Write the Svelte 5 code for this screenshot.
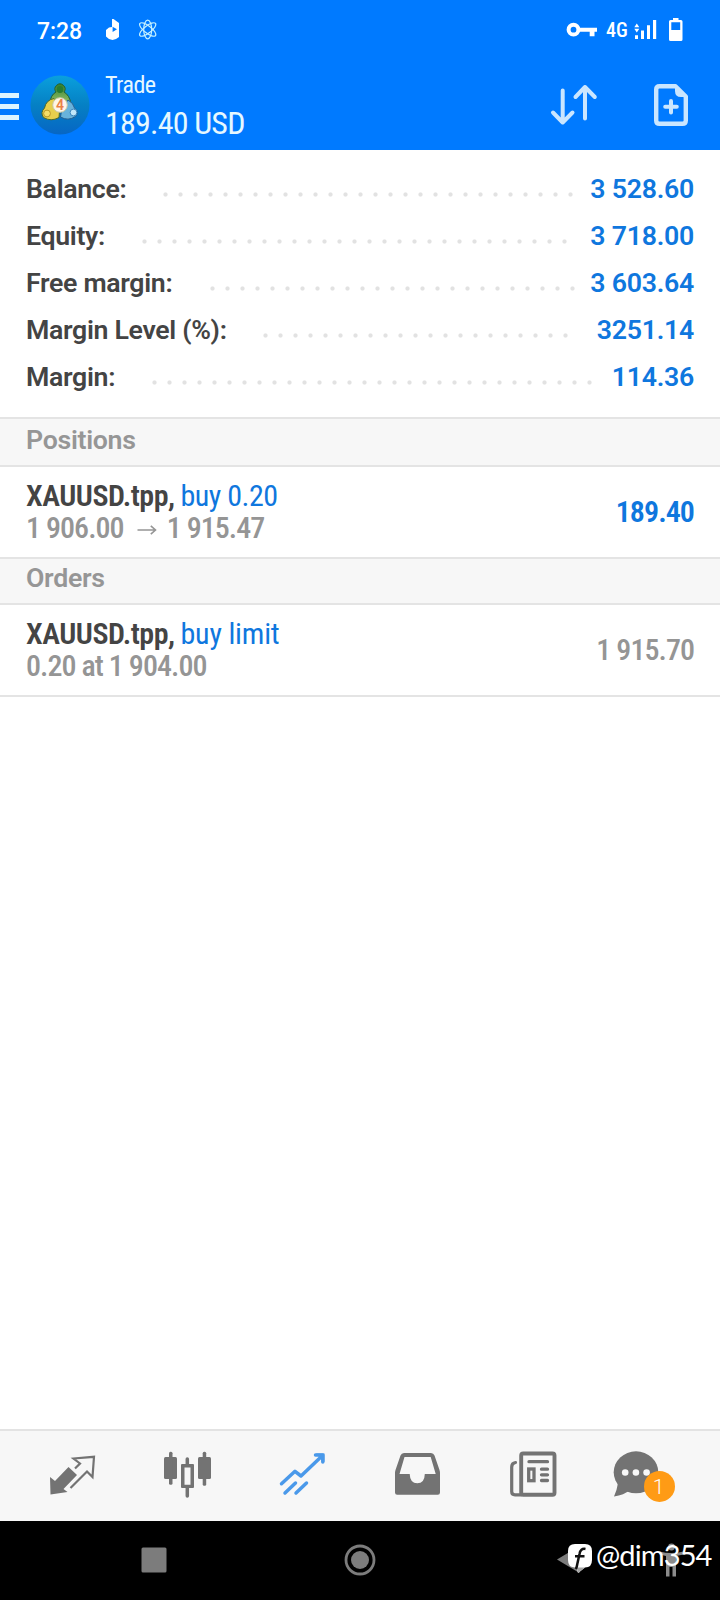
<script>
  const account = [
    { label: 'Balance:', value: '3 528.60', lead: 158, dots: 28 },
    { label: 'Equity:', value: '3 718.00', lead: 137, dots: 29 },
    { label: 'Free margin:', value: '3 603.64', lead: 205, dots: 25 },
    { label: 'Margin Level (%):', value: '3251.14', lead: 258, dots: 21 },
    { label: 'Margin:', value: '114.36', lead: 147, dots: 30 },
  ];
</script>

<div class="screen">
  <header>
    <div class="status">
      <span class="clock">7:28</span>
      <svg class="music" width="16" height="24" viewBox="104 18 16 24">
        <path fill="#fff" fill-rule="evenodd" d="M112 19 H113.500 L119 23 V37 L116 39 L112.500 40 L109 39 L106 36.500 V30 L109 27.500 L112 27 Z M112.600 26.800 V32 L117 29.300 Z" />
      </svg>
      <svg class="atom" width="20" height="22" viewBox="138 19 20 22" fill="none" stroke="#c4f1ff" stroke-width="1.200">
        <ellipse cx="147.700" cy="29.500" rx="4" ry="9.300" />
        <ellipse cx="147.700" cy="29.500" rx="3.600" ry="9.900" transform="rotate(52 147.700 29.500)" />
        <ellipse cx="147.700" cy="29.500" rx="3.600" ry="9.900" transform="rotate(-52 147.700 29.500)" />
      </svg>
      <svg class="key" width="32" height="18" viewBox="566 21 32 18">
        <circle cx="573.500" cy="29.700" r="4.900" fill="none" stroke="#fff" stroke-width="4" />
        <path d="M579 27.700 H597 V31.700 H594.500 V36.300 H589.700 V31.700 H579 Z" fill="#fff" />
      </svg>
      <span class="net">4G</span>
      <svg class="signal" width="24" height="22" viewBox="634 19 24 22" fill="#fff">
        <path d="M634.300 27.200 L636.800 23.500 L639.300 27.200 Z M634.300 28.800 L636.800 32.500 L639.300 28.800 Z M635 35.300 h3 V39 h-3 Z M641 30.500 h3 V39 h-3 Z M647 25.300 h3 V39 h-3 Z M653 20 h3.200 V39 h-3.200 Z" />
      </svg>
      <svg class="battery" width="16" height="24" viewBox="668 18 16 24">
        <path fill="#fff" fill-rule="evenodd" d="M673 18 H678.500 V20 H681 Q682.500 20 682.500 21.500 V39.500 Q682.500 41 681 41 H670.500 Q669 41 669 39.500 V21.500 Q669 20 670.500 20 H673 Z M671.300 22.300 V30 H680.200 V22.300 Z" />
      </svg>
    </div>
    <div class="appbar">
      <div class="burger"><i></i><i></i><i></i></div>
      <svg class="logo" width="62" height="62" viewBox="0 0 62 62">
        <defs>
          <linearGradient id="disc" x1="0" y1="0" x2="0" y2="1">
            <stop offset="0" stop-color="#0aa0dd" />
            <stop offset=".5" stop-color="#0580c4" />
            <stop offset="1" stop-color="#0766c4" />
          </linearGradient>
          <linearGradient id="leaf" x1="0" y1="0" x2="0" y2="1">
            <stop offset="0" stop-color="#36802c" />
            <stop offset="1" stop-color="#a8cf78" />
          </linearGradient>
        </defs>
        <circle cx="31" cy="31" r="29.500" fill="url(#disc)" />
        <path d="M21 29 Q21.500 21 27 18 A5 5 0 1 1 35 18 Q40.500 21 42 30 L31 34 Z" fill="url(#leaf)" stroke="#24602f" stroke-width="1" />
        <circle cx="31" cy="15.500" r="3.400" fill="#287c30" />
        <path d="M25 24.500 Q17 26 15.500 34 Q11 38.500 14.500 43.500 Q22 48 30 43.500 L31 31 Z" fill="#e6cf4c" stroke="#4d6a2b" stroke-width="1" />
        <circle cx="18" cy="39.500" r="3.400" fill="#f5de68" stroke="#bb9827" />
        <path d="M39 26 Q44.500 29 45.500 34 Q50.500 38 46.500 42.500 Q39 47.500 31.500 43 L33 34 Z" fill="#68b3dc" stroke="#265f91" stroke-width="1" />
        <circle cx="44.500" cy="38.500" r="3.400" fill="#c2e8fa" stroke="#3b86bd" />
        <circle cx="31" cy="31" r="7.300" fill="#fff5e8" stroke="#c8c8a3" />
        <text x="31" y="35.800" text-anchor="middle" font-family="Roboto, sans-serif" font-size="14" font-weight="600" fill="#eb8145">4</text>
      </svg>
      <div class="title">
        <div class="name">Trade</div>
        <div class="amount">189.40 USD</div>
      </div>
      <svg class="sort" width="48" height="44" viewBox="550 83 48 44" fill="none" stroke="#cae6ff" stroke-width="4" stroke-linecap="round" stroke-linejoin="round">
        <path d="M562.700 90.500 V122 M553 112.500 L562.700 122.500 L572.500 112.500 M585 118.500 V87 M575.500 97 L585 87 L594.800 97" />
      </svg>
      <svg class="add" width="36" height="44" viewBox="653 83 36 44">
        <path d="M675.500 86.200 H659.500 Q656.200 86.200 656.200 89.500 V120.500 Q656.200 123.800 659.500 123.800 H682.500 Q685.800 123.800 685.800 120.500 V96.500 Z" fill="none" stroke="#cae6ff" stroke-width="4.400" stroke-linejoin="round" />
        <path d="M675 85 V91 Q675 97 681 97 H687 Z" fill="#cae6ff" />
        <path d="M671 101 V112.600 M665.200 106.800 H676.800" stroke="#cae6ff" stroke-width="4" stroke-linecap="round" />
      </svg>
    </div>
  </header>

  <section class="account">
    {#each account as row}
      <div class="line" style="grid-template-columns: {row.lead - 26}px {row.dots * 15}px 1fr">
        <span class="label">{row.label}</span>
        <span class="dots"></span>
        <span class="value">{row.value}</span>
      </div>
    {/each}
  </section>

  <h2 class="first"><span>Positions</span></h2>
  <div class="deal">
    <div>
      <div class="top"><b>XAUUSD.tpp,</b><span class="side">buy 0.20</span></div>
      <div class="sub">
        <span>1 906.00</span>
        <svg width="20" height="12" viewBox="0 0 20 12" fill="none" stroke="#959595" stroke-width="1.600"><path d="M0.500 6 H18 M13.800 1.800 L18.500 6 L13.800 10.200" /></svg>
        <span>1 915.47</span>
      </div>
    </div>
    <div class="result profit">189.40</div>
  </div>
  <h2><span>Orders</span></h2>
  <div class="deal last">
    <div>
      <div class="top"><b>XAUUSD.tpp,</b><span class="side limit">buy limit</span></div>
      <div class="sub"><span>0.20 at 1 904.00</span></div>
    </div>
    <div class="result">1 915.70</div>
  </div>

  <nav class="tabs">
    <svg viewBox="42 1440 60 60">
      <path d="M50 1477 L55 1481 L68.500 1467 L77 1475 L63.500 1489 L67.500 1492 L50.500 1494.500 Z" fill="#737373" />
      <path d="M75 1468.500 L80 1463.500 L73.500 1458.500 L94 1456.800 L92.500 1477 L87 1471.500 L70.500 1488" fill="none" stroke="#737373" stroke-width="2.200" />
    </svg>
    <svg viewBox="157 1440 60 60" fill="#737373">
      <rect x="164" y="1457" width="13" height="22" rx="1.500" />
      <rect x="169" y="1451.700" width="3.500" height="33" rx="1.500" />
      <rect x="198" y="1457" width="13" height="22" rx="1.500" />
      <rect x="202.700" y="1451.700" width="3.500" height="34" rx="1.500" />
      <path d="M187.300 1459 V1465 M187.300 1487 V1496" stroke="#737373" stroke-width="3.500" stroke-linecap="round" />
      <path fill-rule="evenodd" d="M182 1464 H193 Q194 1464 194 1465 V1487 Q194 1488 193 1488 H182 Q181 1488 181 1487 V1465 Q181 1464 182 1464 Z M184.500 1467.500 V1484.700 H190.500 V1467.500 Z" />
    </svg>
    <svg viewBox="272 1440 60 60" fill="none" stroke="#4a99ea" stroke-width="3.500" stroke-linecap="round" stroke-linejoin="round">
      <path d="M281.500 1483.700 L295 1471.300 L301 1476 L322 1456 M315.500 1455 H322.800 V1462" />
      <path d="M316 1453.500 H324.500 V1462 Z" fill="#4a99ea" stroke="none" />
      <path d="M285 1493 L295.500 1483 M296 1493 L306.500 1483" />
    </svg>
    <svg viewBox="387 1440 60 60" fill="#737373">
      <path fill-rule="evenodd" d="M404 1453 H431 Q433.500 1453 434.500 1455.500 L439.500 1470 Q440 1471.500 440 1473 V1492.500 Q440 1494.700 437.800 1494.700 H397.200 Q395 1494.700 395 1492.500 V1473 Q395 1471.500 395.500 1470 L400.500 1455.500 Q401.500 1453 404 1453 Z M404.500 1457 L399.500 1474 H409.700 Q410 1483.300 417.300 1483.300 Q424.600 1483.300 424.800 1474 H435.700 L430.700 1457 Z" />
    </svg>
    <svg viewBox="502 1440 60 60" fill="none" stroke="#737373" stroke-linecap="round">
      <rect x="521.200" y="1453.500" width="33.300" height="41.200" rx="2" stroke-width="3.900" />
      <path d="M515.500 1462.500 Q511.700 1463 511.700 1467 V1491.500 Q511.700 1494.800 515 1494.800 H521" stroke-width="3.200" />
      <path d="M529 1461.700 H547.500 M541.500 1469.200 H547.500 M541.500 1474.800 H547.500 M541.500 1480.500 H547.500" stroke-width="3.300" />
      <rect x="528.700" y="1469" width="5.300" height="11.700" stroke-width="3.300" />
    </svg>
    <svg viewBox="617 1440 60 60">
      <path d="M618 1483 Q617 1490 614 1496.500 Q624 1495 630 1490 Z" fill="#737373" />
      <ellipse cx="636" cy="1472.300" rx="22.300" ry="21" fill="#737373" />
      <g fill="#f7f7f7"><circle cx="625.200" cy="1472.500" r="3.300" /><circle cx="635.900" cy="1472.500" r="3.300" /><circle cx="646.600" cy="1472.500" r="3.300" /></g>
      <circle cx="659.500" cy="1486.400" r="15.500" fill="#ff9b15" />
      <text x="658.500" y="1494.300" text-anchor="middle" font-family="Roboto, sans-serif" font-size="21" font-weight="300" fill="#fff">1</text>
    </svg>
  </nav>

  <footer>
    <svg class="recent" width="26" height="26" viewBox="0 0 26 26"><rect x=".5" y=".5" width="25" height="25" rx="1.500" fill="#7c7c7c" /></svg>
    <svg class="home" width="32" height="32" viewBox="0 0 32 32"><circle cx="16" cy="16" r="14" fill="none" stroke="#7c7c7c" stroke-width="2.800" /><circle cx="16" cy="16" r="9" fill="#7c7c7c" /></svg>
    <svg class="back" width="24" height="30" viewBox="556 1545 24 30"><path d="M557 1560.500 L579.500 1547 V1574 Z" fill="#7c7c7c" /></svg>
    <svg class="person" width="28" height="36" viewBox="658 1542 28 36" fill="#8b8b8b"><circle cx="671.500" cy="1547" r="3.400" /><path d="M659.500 1551.500 Q671.500 1554.500 683.500 1551.500 V1554.500 L676 1556 V1576.500 H672.500 V1567 H669.500 V1576.500 H666 V1556 L659.500 1554.500 Z" /></svg>
    <div class="mark">
      <svg width="24" height="30" viewBox="0 0 24 30">
        <path d="M7 0 H17 Q24 0 24 7 V16 Q24 23.500 17 23.500 L10 29 L8.500 23.500 H7 Q0 23.500 0 16 V7 Q0 0 7 0 Z" fill="#fff" />
        <path d="M9 23.500 H17 L10 29 Z" fill="#a5a5a5" />
        <path d="M17.500 5 Q12.500 4 11.500 10 L9.300 20 Q8.800 23 8 25 M7 12.300 H16.500" fill="none" stroke="#111" stroke-width="2.500" />
      </svg>
      <span>@dim354</span>
    </div>
  </footer>
</div>

<style>
  :global(body) { background: #fff; }
  .screen {
    width: 720px;
    height: 1600px;
    display: flex;
    flex-direction: column;
    overflow: hidden;
    background: #fff;
    font-family: Roboto, sans-serif;
    color: #444;
  }
  svg { display: block; flex: none; }
  header { height: 150px; background: #007aff; color: #fff; }
  .status { height: 62px; display: flex; align-items: flex-start; }
  .clock { width: 67px; margin-left: 37px; line-height: 63px; font-size: 23px; font-weight: 500; letter-spacing: -0.100px; white-space: nowrap; }
  .music { margin-top: 18px; }
  .atom { margin: 19px 0 0 18px; }
  .key { margin: 21px 0 0 auto; }
  .net { width: 28px; margin-left: 8px; line-height: 60px; font-size: 20px; font-weight: 500; font-stretch: 75%; }
  .signal { margin-top: 19px; }
  .battery { margin: 18px 36px 0 10px; }

  .appbar { height: 88px; display: flex; align-items: flex-start; }
  .burger { width: 29px; padding-top: 31px; display: grid; gap: 6.500px; }
  .burger i { width: 19px; height: 4.500px; background: #dcf4ff; }
  .logo { margin-top: 12px; }
  .title { margin-left: 14px; padding-top: 7px; font-stretch: 75%; white-space: nowrap; color: #e6f8ff; }
  .name { line-height: 32px; font-size: 24px; letter-spacing: -0.500px; }
  .amount { line-height: 45px; font-size: 32px; letter-spacing: -0.800px; }
  .sort { margin: 21px 55px 0 auto; }
  .add { margin: 21px 31px 0 0; }

  .account { height: 235px; padding: 0 26px; margin-top: 16px; margin-bottom: 16px; box-sizing: border-box; }
  .line { height: 47px; display: grid; line-height: 47px; font-size: 26.700px; font-weight: 600; white-space: nowrap; }
  .label { letter-spacing: -0.320px; }
  .value { text-align: right; color: #0f77de; letter-spacing: -0.250px; }
  .dots { background: radial-gradient(circle at 7.500px 28.500px, #e2e2e2 1.700px, transparent 2.500px) 0 0 / 15px 47px repeat-x; }

  h2 {
    margin: 0;
    height: 48px;
    box-sizing: border-box;
    padding-left: 26px;
    border-top: 2px solid #e4e4e4;
    border-bottom: 2px solid #e4e4e4;
    background: #f7f7f7;
    color: #969696;
    font-size: 26.700px;
    font-weight: 600;
    letter-spacing: -0.300px;
    line-height: 38px;
  }
  .first { height: 50px; padding-top: 2px; }
  .deal {
    height: 90px;
    padding: 0 26px;
    display: flex;
    justify-content: space-between;
    align-items: center;
    font-size: 30px;
    font-weight: 500;
    font-stretch: 75%;
    line-height: 32px;
    white-space: nowrap;
  }
  .deal > div:first-child { margin-top: -1px; }
  .last { border-bottom: 2px solid #e4e4e4; }
  .top { display: flex; }
  .top b { font-weight: 600; width: 154.500px; letter-spacing: -0.500px; }
  .side { color: #0f77de; font-weight: 400; letter-spacing: -0.480px; }
  .limit { letter-spacing: -0.200px; }
  .sub, .result { color: #959595; font-weight: 550; letter-spacing: -0.950px; }
  .sub { display: flex; }
  .sub svg { margin: 12px 10px 0 13px; }
  .deal .profit { color: #0f77de; font-weight: 650; }

  .tabs {
    height: 92px;
    margin-top: auto;
    box-sizing: border-box;
    padding: 9px 0 0 42px;
    display: flex;
    gap: 55px;
    border-top: 2px solid #e3e3e3;
    background: #f7f7f7;
  }
  .tabs svg { width: 60px; height: 60px; overflow: visible; }
  footer { height: 79px; position: relative; display: flex; align-items: flex-start; background: #000; }
  .recent { margin: 26px 0 0 141px; }
  .home { margin: 23px 0 0 177px; }
  .back { margin: 23px 0 0 180px; }
  .person { margin: 21px 0 0 78px; }
  .mark { position: absolute; top: 23px; left: 568px; display: flex; color: #fff; }
  .mark span { margin-left: 4px; font: 400 29px/22px Lato, sans-serif; letter-spacing: -0.900px; }
</style>
